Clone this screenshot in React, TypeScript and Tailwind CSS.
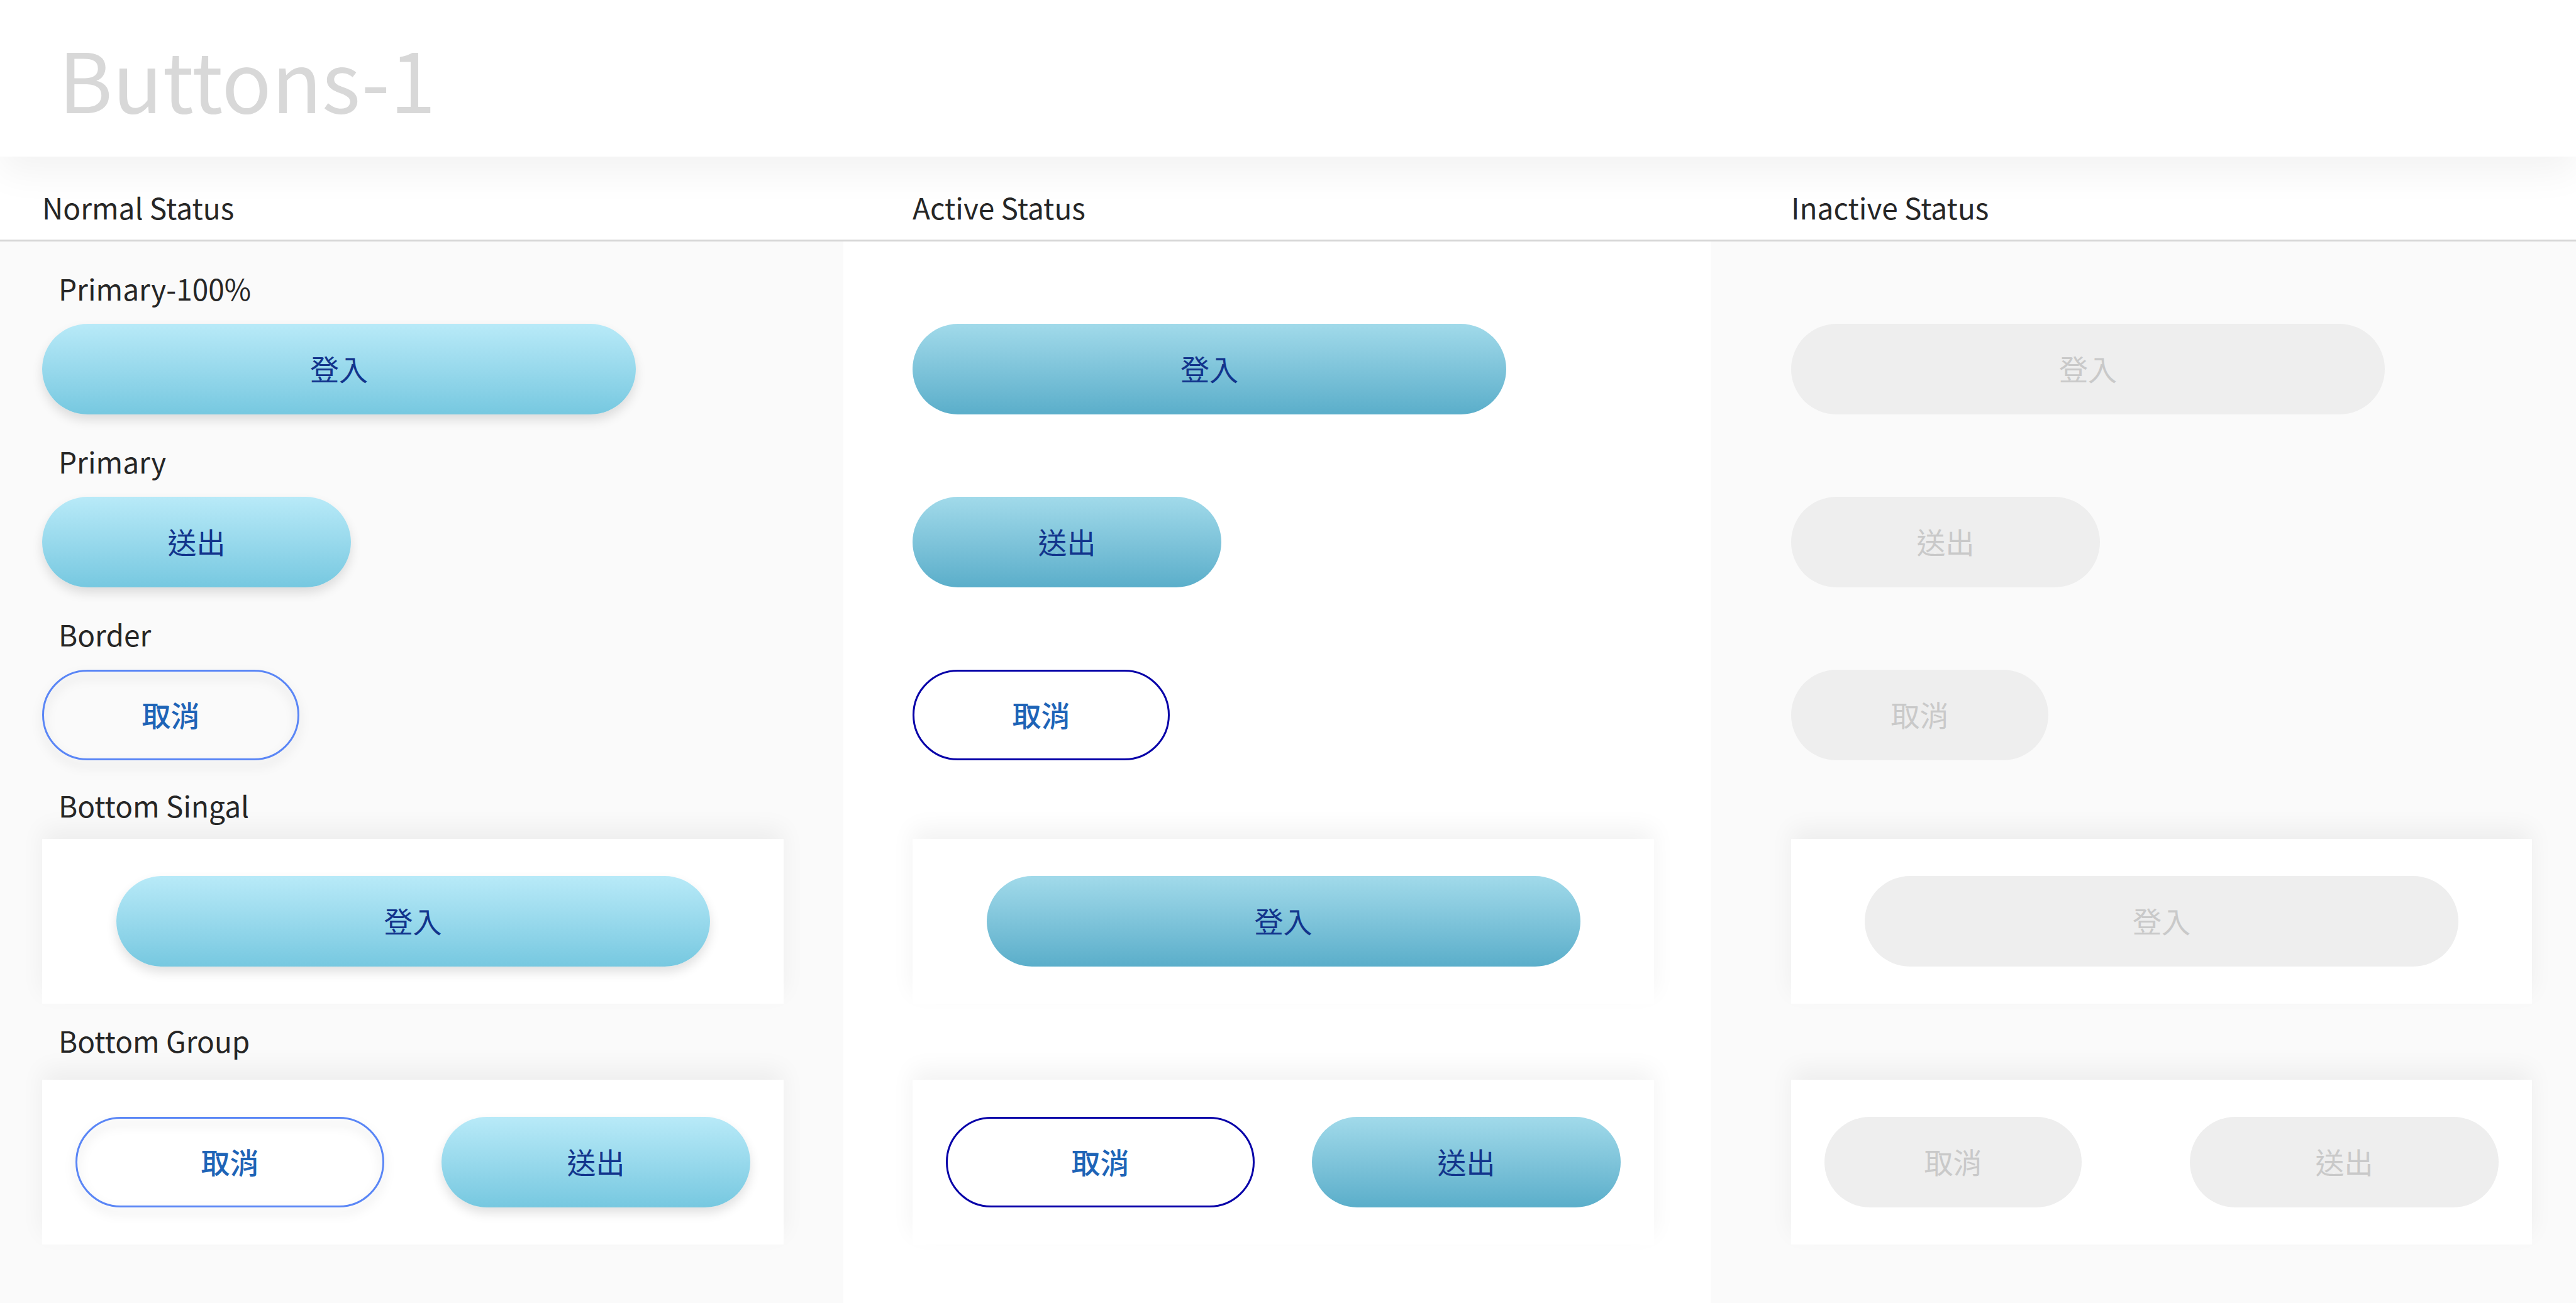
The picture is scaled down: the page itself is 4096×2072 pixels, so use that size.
import type { ReactNode } from 'react';

type Status = 'normal' | 'active' | 'inactive';

const COLUMNS = 'grid grid-cols-[1341fr_1379fr_1376fr]';

const PADDING: Record<Status, string> = {
  normal: 'pl-[67px] pr-[95px]',
  active: 'pl-[110px] pr-[90px]',
  inactive: 'pl-32 pr-[70px]',
};

const HEADINGS: Record<Status, string> = {
  normal: 'Normal Status',
  active: 'Active Status',
  inactive: 'Inactive Status',
};

const STATUSES: Status[] = ['normal', 'active', 'inactive'];

const SOLID: Record<Status, string> = {
  normal:
    'bg-linear-to-b from-[#b8eaf8] to-[#76c8e0] text-[#12348c] shadow-[0_9px_17px_rgba(0,0,0,0.12)]',
  active: 'bg-linear-to-b from-[#a1daea] to-[#5aaeca] text-[#12348c]',
  inactive: 'bg-[#eeeeee] text-[#c9c9c9]',
};

// The outline sits on a pseudo-element so that only the ring casts a shadow, not the label.
const OUTLINE: Record<Status, string> = {
  normal:
    'font-medium text-[#1e64b7] before:absolute before:inset-0 before:rounded-full before:border-3 before:border-[#5a86f6] before:drop-shadow-[0_9px_8px_rgba(0,0,0,0.17)]',
  active:
    'font-medium text-[#1e64b7] before:absolute before:inset-0 before:rounded-full before:border-3 before:border-[#0700a8]',
  inactive: 'bg-[#eeeeee] text-[#c9c9c9]',
};

const WIDTHS = {
  full: 'w-[944px]',
  medium: 'w-[491px]',
  small: 'w-[409px]',
};

interface PillProps {
  status: Status;
  variant?: 'solid' | 'outline';
  width: keyof typeof WIDTHS;
  children: string;
}

function Pill({ status, variant = 'solid', width, children }: PillProps) {
  const look = variant === 'solid' ? SOLID[status] : OUTLINE[status];
  return (
    <button
      type="button"
      disabled={status === 'inactive'}
      className={`relative block h-36 max-w-full rounded-full pb-1 text-[46px] leading-[56px] ${WIDTHS[width]} ${look}`}
    >
      {children}
    </button>
  );
}

function Label({ show, children }: { show: boolean; children: string }) {
  return (
    <div className="h-14 pl-[26px]">
      {show && <h3 className="text-[46px] leading-[56px]">{children}</h3>}
    </div>
  );
}

function Bar({ justify, children }: { justify: string; children: ReactNode }) {
  return (
    <div
      className={`flex bg-white px-[53px] py-[59px] shadow-[0_-17px_35px_rgba(0,0,0,0.05)] ${justify}`}
    >
      {children}
    </div>
  );
}

function Column({ status }: { status: Status }) {
  const labelled = status === 'normal';
  return (
    <section
      aria-label={HEADINGS[status]}
      className={`flex flex-col pt-[46px] pb-[93px] ${PADDING[status]} ${
        status === 'active' ? 'bg-white' : 'bg-[#fafafa]'
      }`}
    >
      <div className="flex flex-col gap-[46px]">
        <div className="flex flex-col gap-[29px]">
          <Label show={labelled}>Primary-100%</Label>
          <Pill status={status} width="full">登入</Pill>
        </div>
        <div className="flex flex-col gap-[29px]">
          <Label show={labelled}>Primary</Label>
          <Pill status={status} width="medium">送出</Pill>
        </div>
        <div className="flex flex-col gap-[29px]">
          <Label show={labelled}>Border</Label>
          <Pill status={status} variant="outline" width="small">取消</Pill>
        </div>
      </div>
      <div className="mt-[43px] flex flex-col gap-[26px]">
        <Label show={labelled}>Bottom Singal</Label>
        <Bar justify="justify-center">
          <Pill status={status} width="full">登入</Pill>
        </Bar>
      </div>
      <div className="mt-[30px] flex flex-col gap-[35px]">
        <Label show={labelled}>Bottom Group</Label>
        <Bar justify="justify-between">
          <Pill
            status={status}
            variant="outline"
            width={status === 'inactive' ? 'small' : 'medium'}
          >
            取消
          </Pill>
          <Pill status={status} width="medium">送出</Pill>
        </Bar>
      </div>
    </section>
  );
}

export default function App() {
  return (
    <div
      lang="zh-Hant"
      className="flex min-h-screen flex-col overflow-x-hidden bg-white font-['Noto_Sans_CJK_TC',sans-serif] text-[#262626]"
    >
      <header className="relative z-10 bg-white pt-[43px] pb-[46px] pl-[93px] shadow-[0_23px_58px_rgba(0,0,0,0.055)]">
        <h1 className="text-[131px] leading-[160px] text-[#d8d8d8]">Buttons-1</h1>
      </header>
      <div className={`${COLUMNS} border-b-3 border-[#d6d6d6] pt-[52px] pb-[24px]`}>
        {STATUSES.map((status) => (
          <h2 key={status} className={`text-[46px] leading-[56px] ${PADDING[status]}`}>
            {HEADINGS[status]}
          </h2>
        ))}
      </div>
      <main className={`${COLUMNS} grow`}>
        {STATUSES.map((status) => (
          <Column key={status} status={status} />
        ))}
      </main>
    </div>
  );
}
